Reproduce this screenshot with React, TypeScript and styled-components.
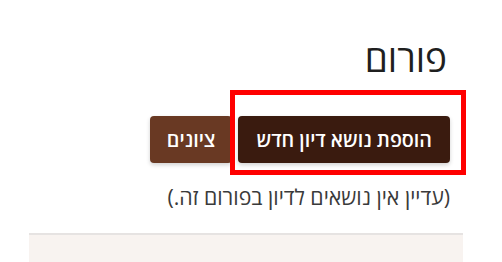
import React from "react";
import styled, { createGlobalStyle } from "styled-components";

const GlobalStyle = createGlobalStyle`
  html, body {
    margin: 0;
    padding: 0;
    background: #ffffff;
  }
  body {
    font-family: "Open Sans", "DejaVu Sans", "Liberation Sans", sans-serif;
  }
`;

const Page = styled.div`
  direction: rtl;
  width: 434px;
  margin-left: 29px;
  padding-top: 36px;
`;

const Content = styled.div`
  padding-right: 13px;
`;

const Title = styled.h1`
  margin: 0 3px 0 0;
  font-size: 37px;
  line-height: 44px;
  font-weight: 400;
  color: #1f1f1f;
`;

const Actions = styled.div`
  display: flex;
  gap: 6px;
  margin-top: 36px;
`;

const Marked = styled.div`
  position: relative;
  display: flex;

  &::after {
    content: "";
    position: absolute;
    top: -26px;
    bottom: -12px;
    right: -16px;
    left: -8px;
    border: 5px solid #ff0000;
    pointer-events: none;
  }
`;

const Button = styled.button<{ $tone: "dark" | "brown" }>`
  height: 47px;
  padding: 0 ${(p) => (p.$tone === "dark" ? "18px" : "17px")};
  border: none;
  border-radius: 4px;
  background: ${(p) => (p.$tone === "dark" ? "#3a1b0f" : "#693923")};
  color: #ffffff;
  font-family: inherit;
  font-size: 19.7px;
  font-weight: 600;
  box-shadow: 0 2px 4px rgba(0, 0, 0, 0.18);
  cursor: pointer;
`;

const Empty = styled.p`
  margin: 19px 0 0;
  font-size: 21.3px;
  line-height: 30px;
  color: #3a3a3a;
`;

const Panel = styled.div`
  margin-top: 21px;
  height: 40px;
  background: #f8f3f0;
  border-top: 2px solid #e6e3e2;
`;

export default function App() {
  return (
    <>
      <GlobalStyle />
      <Page>
        <Content>
          <Title>פורום</Title>
          <Actions>
            <Marked>
              <Button $tone="dark">הוספת נושא דיון חדש</Button>
            </Marked>
            <Button $tone="brown">ציונים</Button>
          </Actions>
          <Empty>(עדיין אין נושאים לדיון בפורום זה.)</Empty>
        </Content>
        <Panel />
      </Page>
    </>
  );
}
